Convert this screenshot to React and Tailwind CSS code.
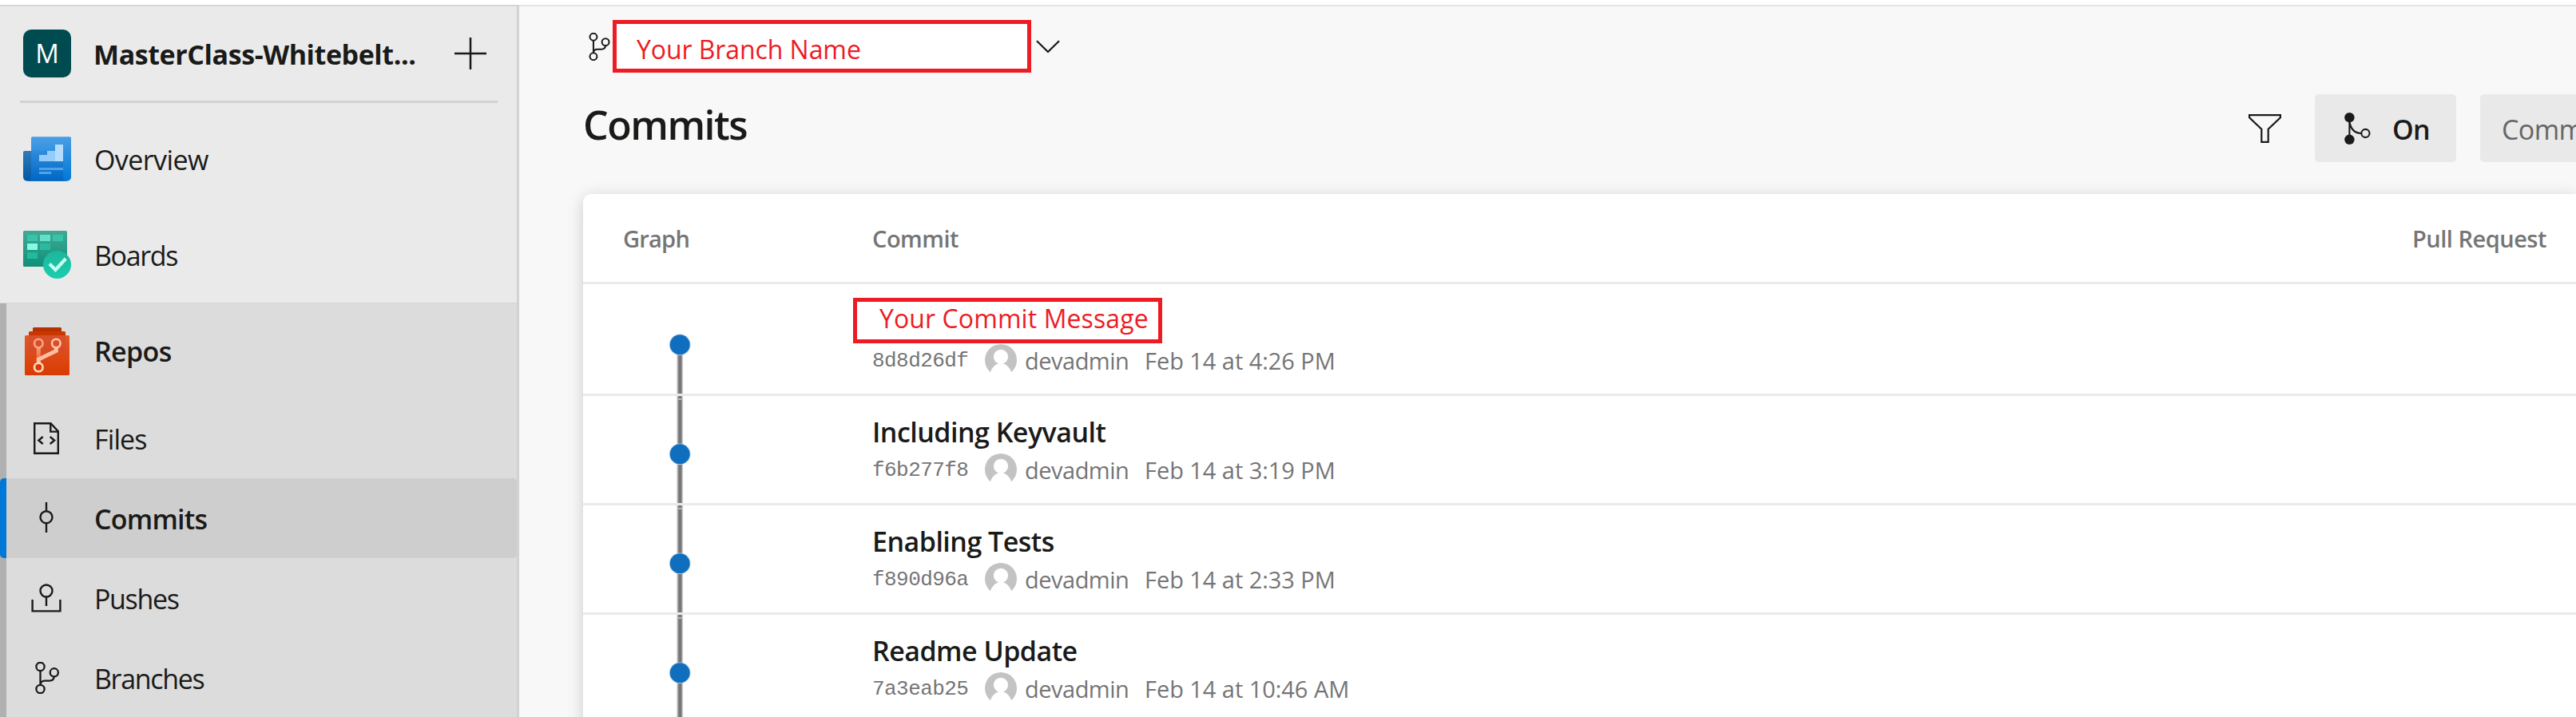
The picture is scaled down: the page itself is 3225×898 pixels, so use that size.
const INK = "#1a1a19";

function OverviewIcon() {
  return (
    <svg width="60" height="60" viewBox="0 0 60 60">
      <defs>
        <linearGradient id="ovBack" x1="0" y1="0" x2="0" y2="1">
          <stop offset="0" stopColor="#2f7bbd" />
          <stop offset="1" stopColor="#0058a3" />
        </linearGradient>
        <linearGradient id="ovFront" x1="0" y1="0" x2="0" y2="1">
          <stop offset="0" stopColor="#4a9ee4" />
          <stop offset="1" stopColor="#0078d7" />
        </linearGradient>
        <linearGradient id="ovInner" x1="0" y1="0" x2="0" y2="1">
          <stop offset="0" stopColor="#2f8bdc" />
          <stop offset="1" stopColor="#0067c4" />
        </linearGradient>
      </defs>
      <path d="M2 20H14V57.7H5A5 5 0 0 1 0 52.7V22A2 2 0 0 1 2 20Z" fill="url(#ovBack)" />
      <path d="M11.5 2.3H58.5A1.5 1.5 0 0 1 60 3.8V52.7A5 5 0 0 1 55 57.7H5Q10 57.7 10 52V3.8A1.5 1.5 0 0 1 11.5 2.3Z" fill="url(#ovFront)" />
      <path d="M10 20H50V52Q50 57.7 55 57.7H5Q10 57.7 10 52Z" fill="url(#ovInner)" />
      <path d="M20 25H30V20H40V33H20Z" fill="#93ccfb" />
      <path d="M40 12H50V33H40Z" fill="#b3dcfd" />
      <path d="M20 41H50V44H20ZM20 46H35V49H20Z" fill="#4fa3ea" />
    </svg>
  );
}

function BoardsIcon() {
  return (
    <svg width="60" height="60" viewBox="0 0 60 60">
      <defs>
        <linearGradient id="bdBoard" x1="0" y1="0" x2="0" y2="1">
          <stop offset="0" stopColor="#43a896" />
          <stop offset="1" stopColor="#0f9078" />
        </linearGradient>
        <linearGradient id="bdCheck" x1="0" y1="0" x2="0" y2="1">
          <stop offset="0" stopColor="#1fb59b" />
          <stop offset="1" stopColor="#19cfb0" />
        </linearGradient>
      </defs>
      <rect width="55" height="45" rx="1.5" fill="url(#bdBoard)" />
      <rect x="5" y="5" width="13" height="8" fill="#36c3a7" />
      <rect x="21" y="5" width="13" height="8" fill="#62e0c8" />
      <rect x="37" y="5" width="13" height="8" fill="#36c3a7" />
      <rect x="5" y="16" width="13" height="8" fill="#86fbe3" />
      <rect x="21" y="16" width="13" height="8" fill="#28bba0" />
      <rect x="5" y="27" width="13" height="8" fill="#1fbba0" />
      <circle cx="42.5" cy="42.5" r="17.5" fill="url(#bdCheck)" />
      <path d="M33 41.5L40.5 49L53.3 35" fill="none" stroke="#c6fff2" strokeWidth="4.2" />
    </svg>
  );
}

function ReposIcon() {
  return (
    <svg width="56" height="60" viewBox="0 0 56 60">
      <defs>
        <linearGradient id="rpBody" x1="0" y1="0" x2="0" y2="1">
          <stop offset="0" stopColor="#e0592a" />
          <stop offset="1" stopColor="#da3b01" />
        </linearGradient>
        <linearGradient id="rpStem" x1="0" y1="0" x2="0" y2="1">
          <stop offset="0" stopColor="#f79f7c" />
          <stop offset="1" stopColor="#e8612f" />
        </linearGradient>
      </defs>
      <rect x="10" y="0" width="36" height="8" rx="1.5" fill="#b93000" />
      <rect x="5" y="5" width="46" height="8" rx="1.5" fill="#ca3600" />
      <rect x="0" y="10" width="56" height="50" rx="1.5" fill="url(#rpBody)" />
      <rect x="5" y="10" width="46" height="22" fill="#d24a2c" opacity="0.55" />
      <rect x="14.8" y="25" width="5" height="18" fill="url(#rpStem)" />
      <path d="M39.3 25V29.5L17.3 40V45" fill="none" stroke="#ffbfa3" strokeWidth="5" />
      <circle cx="17.3" cy="20" r="5.3" fill="none" stroke="#f9a584" strokeWidth="2.6" />
      <circle cx="39.3" cy="20" r="5.3" fill="none" stroke="#ffc4a8" strokeWidth="2.6" />
      <circle cx="17.3" cy="50" r="5.3" fill="#da3b01" stroke="#ffd9c8" strokeWidth="2.6" />
    </svg>
  );
}

function FilesIcon() {
  return (
    <svg width="32" height="40" viewBox="0 0 32 40" fill="none" stroke={INK} strokeWidth="2.4">
      <path d="M1.2 1.2H21.5L30.8 11.3V38.8H1.2Z" />
      <path d="M21.3 1.5V11.6H30.5" />
      <path d="M11.7 18L6.3 22.5L11.7 27M20.7 18L26.1 22.5L20.7 27" />
    </svg>
  );
}

function CommitsIcon() {
  return (
    <svg width="40" height="40" viewBox="0 0 40 40" fill="none" stroke={INK} strokeWidth="2.4">
      <circle cx="20" cy="18.7" r="7.5" />
      <path d="M20 0V11M20 26.3V38" />
    </svg>
  );
}

function PushesIcon() {
  return (
    <svg width="40" height="40" viewBox="0 0 40 40" fill="none" stroke={INK} strokeWidth="2.4">
      <circle cx="20" cy="11" r="7.5" />
      <path d="M20 18.5V30M2.6 22V36.4H37.4V22" />
    </svg>
  );
}

function BranchIcon({ size = 40 }) {
  return (
    <svg width={size} height={size} viewBox="0 0 40 40" fill="none" stroke={INK} strokeWidth="2.3" className="shrink-0">
      <circle cx="12.5" cy="6" r="5.1" />
      <circle cx="29.8" cy="13.3" r="5.1" />
      <circle cx="12.5" cy="34" r="5.1" />
      <path d="M12.5 11V29M29.8 18.4Q29.3 23.6 24 23.6H18Q13.2 23.8 12.5 28" />
    </svg>
  );
}

function FilterIcon() {
  return (
    <svg width="41" height="36" viewBox="0 0 41 36" fill="none" stroke={INK} strokeWidth="2.2">
      <path d="M1.1 1.1H39.9V4.2L24.7 18.7V34.9H16.3V18.7L1.1 4.2Z" />
    </svg>
  );
}

function MergeGraphIcon() {
  return (
    <svg width="33" height="40" viewBox="0 0 33 40" fill="none" stroke={INK} strokeWidth="2.1">
      <path d="M6.4 6V34M6.4 11Q8.5 25.5 21 26" />
      <circle cx="6.4" cy="6.2" r="6.2" fill={INK} stroke="none" />
      <circle cx="6.4" cy="33.8" r="6.2" fill={INK} stroke="none" />
      <circle cx="26.4" cy="26" r="5.1" />
    </svg>
  );
}

function Avatar() {
  return (
    <svg width="40" height="40" viewBox="0 0 40 40" className="shrink-0">
      <circle cx="20" cy="20" r="20" fill="#c3c3c3" />
      <circle cx="20" cy="15.8" r="9.1" fill="#fff" />
      <path d="M5.5 40C7 31 12.5 24 20 24S33 31 34.5 40Z" fill="#fff" />
    </svg>
  );
}

function GraphCell({ first }) {
  const top = first ? 3 : 0;
  return (
    <svg width="362" height={134 + top} className="shrink-0">
      <rect x="117.3" y={first ? 75 : 0} width="7.8" height="137" fill="#cdcdcd" />
      <rect x="118.4" y={first ? 75 : 0} width="5.6" height="137" fill="#9a9a9a" />
      <rect x="119.5" y={first ? 75 : 0} width="3.4" height="137" fill="#767676" />
      {!first && <rect x="118.4" y="3" width="5.6" height="2" fill="#b4b4b4" />}
      <circle cx="121.2" cy={72.7 + top} r="13.3" fill="#a9cbe8" />
      <circle cx="121.2" cy={72.7 + top} r="12.4" fill="#106ebe" />
    </svg>
  );
}

function HubLink({ icon, label, className = "" }) {
  return (
    <div className={"flex items-center pl-[29px] " + className}>
      <span className="flex w-[60px] shrink-0 justify-center">{icon}</span>
      <span className="ml-[29px] pt-[2px]">{label}</span>
    </div>
  );
}

function SubLink({ icon, label, className = "" }) {
  return (
    <div className={"flex h-[100px] items-center " + className}>
      <span className="ml-[21px] flex w-[57px] shrink-0 justify-center">{icon}</span>
      <span className="ml-[32px] pt-[2px]">{label}</span>
    </div>
  );
}

function Sidebar() {
  return (
    <aside className="flex w-[650px] shrink-0 flex-col border-r-[3px] border-[#d2d2d2] bg-[#eaeaea] text-[34px] tracking-[-1.35px]">
      <div className="h-[2px] shrink-0 bg-[#d6d6d6]" />
      <div className="flex h-[118px] shrink-0 items-center pl-[29px]">
        <div className="flex size-[60px] items-center justify-center rounded-[10px] bg-[#004b50] text-[33px] tracking-normal text-white">
          M
        </div>
        <span className="ml-[28px] w-[450px] pt-[2px] font-bold tracking-[-0.41px] whitespace-nowrap">
          MasterClass-Whitebelt...
        </span>
        <svg width="40" height="40" viewBox="0 0 40 40" stroke={INK} strokeWidth="2.5" className="ml-[2px]">
          <path d="M20 0V40M0 20H40" />
        </svg>
      </div>
      <div className="mr-[24px] mb-[10px] ml-[25px] h-[3px] shrink-0 bg-[#d2d2d2]" />
      <HubLink icon={<OverviewIcon />} label="Overview" className="h-[120px] shrink-0 tracking-[-0.6px]" />
      <HubLink icon={<BoardsIcon />} label="Boards" className="h-[120px] shrink-0" />
      <div className="flex h-[520px] shrink-0 border-t border-[#d6d6d6] bg-[#dcdcdc]">
        <div className="w-[8px] bg-[#b0b0b0]">
          <div className="mt-[219px] h-[100px] rounded-l-[5px] bg-[#0078d7]" />
        </div>
        <div className="flex-1">
          <div className="flex h-[119px] items-center pl-[21px] font-semibold tracking-[-0.62px]">
            <span className="flex w-[60px] justify-center">
              <ReposIcon />
            </span>
            <span className="ml-[29px] pt-[2px]">Repos</span>
          </div>
          <SubLink icon={<FilesIcon />} label="Files" className="tracking-[-0.87px]" />
          <SubLink
            icon={<CommitsIcon />}
            label="Commits"
            className="rounded-r-[5px] bg-[#cecece] font-semibold tracking-[-0.78px]"
          />
          <SubLink icon={<PushesIcon />} label="Pushes" />
          <SubLink icon={<BranchIcon />} label="Branches" />
        </div>
      </div>
    </aside>
  );
}

const commits = [
  { hash: "8d8d26df", date: "Feb 14 at 4:26 PM" },
  { title: "Including Keyvault", hash: "f6b277f8", date: "Feb 14 at 3:19 PM" },
  { title: "Enabling Tests", hash: "f890d96a", date: "Feb 14 at 2:33 PM" },
  { title: "Readme Update", hash: "7a3eab25", date: "Feb 14 at 10:46 AM" },
];

function CommitRow({ commit }) {
  return (
    <div className={"flex shrink-0 border-b-[3px] border-[#eaeaea] " + (commit.title ? "h-[137px]" : "h-[140px]")}>
      <GraphCell first={!commit.title} />
      <div>
        {commit.title ? (
          <div className="mt-[21px] mb-[3px] h-[48px] text-[34px] leading-[48px] font-semibold tracking-[-0.52px]">
            {commit.title}
          </div>
        ) : (
          <div className="mt-[17px] mb-px -ml-[24px] flex h-[57px] w-[387px] items-center border-[5px] border-[#ed1c24] pb-[5px] pl-[28px] text-[32px] leading-none tracking-[0.09px] whitespace-nowrap text-[#ed1c24]">
            Your Commit Message
          </div>
        )}
        <div className="flex h-[40px] items-center text-[29px] leading-[40px] whitespace-nowrap text-[#757575]">
          <span className="w-[141px] pt-[2px] font-['Liberation_Mono',monospace] text-[26px] tracking-[-0.55px]">
            {commit.hash}
          </span>
          <Avatar />
          <span className="ml-[10px] w-[150px] pt-px tracking-[-0.5px]">devadmin</span>
          <span className="pt-px tracking-[-0.05px]">{commit.date}</span>
        </div>
      </div>
    </div>
  );
}

function Main() {
  return (
    <main className="min-w-0 flex-1 overflow-hidden bg-[#f8f8f8]">
      <div className="h-[2px] bg-[#e4e4e4]" />
      <div className="mt-[17px] flex items-center pl-[81.5px]">
        <BranchIcon size={35} />
        <div className="ml-[0.5px] flex h-[66px] w-[524px] items-center border-[5px] border-[#ed1c24] bg-white pt-[7px] pl-[25px] text-[32px] leading-none tracking-[-0.08px] text-[#ed1c24]">
          Your Branch Name
        </div>
        <svg width="30" height="17" viewBox="0 0 30 17" fill="none" stroke={INK} strokeWidth="2.3" className="ml-[6px]">
          <path d="M1 1.2L15 15L29 1.2" />
        </svg>
      </div>
      <div className="mt-[27px] mb-[40px] flex h-[85px] items-center pl-[80px]">
        <h1 className="w-[2085px] pb-[10px] text-[50px] leading-none font-semibold tracking-[-1.5px]">Commits</h1>
        <FilterIcon />
        <div className="ml-[42px] flex h-[85px] w-[177px] shrink-0 items-center rounded-[5px] bg-[#e9e9e9] pl-[37px]">
          <MergeGraphIcon />
          <span className="ml-[27px] pt-[4px] text-[34px] font-semibold tracking-[-0.7px]">On</span>
        </div>
        <div className="ml-[30px] flex h-[85px] w-[120px] shrink-0 items-center overflow-hidden rounded-l-[5px] bg-[#e9e9e9] pt-[4px] pl-[27px] text-[34px] tracking-[-0.6px] text-[#666]">
          Comm
        </div>
      </div>
      <section className="ml-[80px] h-[700px] overflow-hidden rounded-tl-[10px] bg-white shadow-[0_4px_20px_rgba(0,0,0,0.18)]">
        <div className="flex h-[113px] items-center border-b-[3px] border-[#eaeaea] pt-[2px] pl-[50px] text-[29px] font-semibold tracking-[-0.5px] text-[#757575]">
          <span className="w-[312px] tracking-[-0.76px]">Graph</span>
          <span className="w-[1928px]">Commit</span>
          <span className="whitespace-nowrap">Pull Request</span>
        </div>
        {commits.map((commit) => (
          <CommitRow key={commit.hash} commit={commit} />
        ))}
      </section>
    </main>
  );
}

export default function App() {
  return (
    <div className="h-[898px] w-[3225px] overflow-hidden bg-white pt-[6px] font-['Open_Sans','Noto_Sans',sans-serif] text-[#1a1a19]">
      <div className="flex h-[892px] overflow-hidden">
        <Sidebar />
        <Main />
      </div>
    </div>
  );
}
